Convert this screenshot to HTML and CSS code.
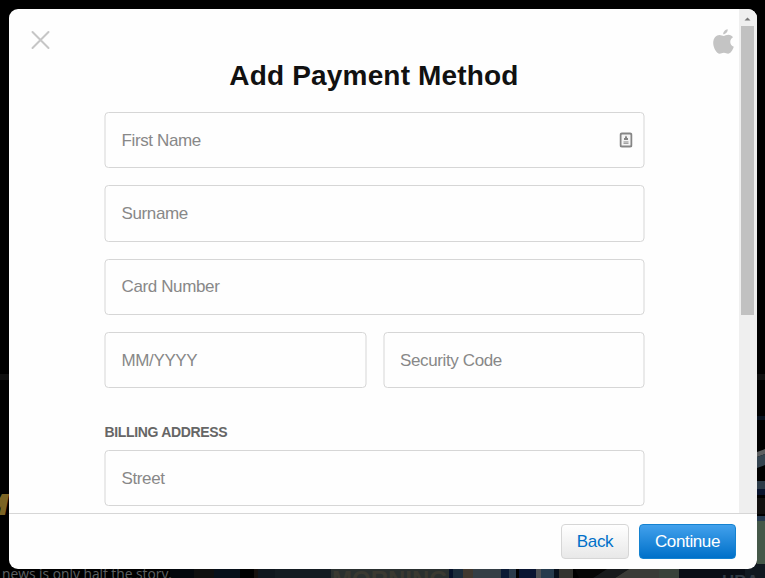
FILE: index.html
```html
<!DOCTYPE html>
<html lang="en">
<head>
    <meta charset="UTF-8">
    <meta name="viewport" content="width=device-width, initial-scale=1.0">
    <title>Add Payment Method</title>
    <link rel="stylesheet" href="styles.css">
</head>
<body>
    <!-- Dimmed page behind the dialog -->
    <svg class="backdrop" viewBox="0 0 765 578" aria-hidden="true">
        <rect width="765" height="578" fill="#000"/>
        <rect y="374" width="765" height="6" fill="#101010"/>
        <text x="-16" y="514" class="backdrop-heading">M</text>

        <!-- right edge -->
        <rect x="757" y="416" width="8" height="4" fill="#07111f"/>
        <path d="M757 452l8-3v5l-8 3z" fill="#5d5f61"/>
        <path d="M757 457l8-3v11l-8 3z" fill="#34434f"/>
        <rect x="757" y="481" width="8" height="8" fill="#2c3b48"/>
        <rect x="757" y="489" width="8" height="6" fill="#09142d"/>
        <rect x="757" y="498" width="8" height="16" fill="#11100f"/>
        <rect x="757" y="516" width="8" height="5" fill="#273b50"/>
        <rect x="757" y="521" width="8" height="43" fill="#455849"/>
        <rect x="745" y="564" width="20" height="14" fill="#101820"/>

        <!-- bottom edge -->
        <rect x="170" y="569" width="24" height="9" fill="#04080d"/>
        <rect x="194" y="569" width="20" height="9" fill="#0f0f0f"/>
        <rect x="214" y="569" width="26" height="9" fill="#07101a"/>
        <rect x="254" y="569" width="4" height="9" fill="#17110e"/>
        <rect x="258" y="569" width="17" height="9" fill="#10171e"/>
        <rect x="275" y="569" width="56" height="9" fill="#141c22"/>
        <rect x="331" y="569" width="118" height="9" fill="#2a302f"/>
        <text x="332" y="588" class="backdrop-sign">MORNING</text>
        <rect x="449" y="569" width="4" height="9" fill="#07122a"/>
        <rect x="453" y="569" width="10" height="9" fill="#1c2c3b"/>
        <rect x="463" y="569" width="10" height="9" fill="#40382f"/>
        <rect x="473" y="569" width="28" height="9" fill="#343e45"/>
        <rect x="501" y="569" width="8" height="9" fill="#0b1a35"/>
        <rect x="509" y="569" width="7" height="9" fill="#2b3b4b"/>
        <rect x="519" y="569" width="17" height="9" fill="#091431"/>
        <rect x="536" y="569" width="5" height="9" fill="#4d5054"/>
        <rect x="541" y="569" width="13" height="9" fill="#263b4d"/>
        <rect x="554" y="569" width="5" height="9" fill="#07101b"/>
        <rect x="559" y="569" width="14" height="9" fill="#33332f"/>
        <path d="M575 569h32l-14 9h-14z" fill="#060606"/>
        <path d="M607 569h22l-14 9h-22z" fill="#171a1c"/>
        <path d="M629 569h30v9h-44z" fill="#3a3b37"/>
        <rect x="659" y="569" width="20" height="9" fill="#39423a"/>
        <rect x="679" y="569" width="66" height="9" fill="#090d15"/>
        <text x="722" y="587" class="backdrop-label">HBA</text>

        <text x="2" y="579" class="backdrop-text">news is only half the story.</text>
    </svg>

    <div class="modal">
        <div class="modal-body">
            <div class="content">
                <div class="icon-row">
                    <svg class="close-icon" width="20" height="20" viewBox="0 0 20 20">
                        <path d="M2.500 2l16 16M18.500 2l-16 16"/>
                    </svg>
                    <svg class="apple-icon" width="21" height="26" viewBox="0 0 21 26">
                        <path d="M14.700 0.300c.2 2.600-2 5-4.500 5C10 2.800 12.200.600 14.700.300z"/>
                        <path d="M10.700 7c1 0 2.600-1.200 4.800-1.200 1.800 0 3.500.9 4.500 2.400-4 2.300-3.400 7.900.8 9.500-1.100 3.300-3.400 7-5.700 7-1.600 0-2.300-1-4.200-1s-2.700 1-4.200 1C3.500 24.700.2 18.600.2 14 .2 8.800 3.400 6 6.400 6c1.900 0 3.300 1 4.300 1z"/>
                    </svg>
                </div>

                <h1>Add Payment Method</h1>

                <form id="paymentForm" class="payment-form">
                    <div class="field has-icon">
                        <input type="text" name="firstName" placeholder="First Name">
                        <svg class="contact-icon" width="13" height="16" viewBox="0 0 13 16">
                            <rect x="1" y="1.500" width="11" height="13" rx="1.500"/>
                            <path d="M6.500 3.500l1 1.500v1h1v2h-4V6h1V5zM4 9.500h5v1H4zM4 11.300h5v.7H4z"/>
                        </svg>
                    </div>
                    <div class="field">
                        <input type="text" name="surname" placeholder="Surname">
                    </div>
                    <div class="field">
                        <input type="text" name="cardNumber" placeholder="Card Number">
                    </div>
                    <div class="field-row">
                        <div class="field">
                            <input type="text" name="expiry" placeholder="MM/YYYY">
                        </div>
                        <div class="field">
                            <input type="text" name="securityCode" placeholder="Security Code">
                        </div>
                    </div>

                    <h2>BILLING ADDRESS</h2>
                    <div class="field">
                        <input type="text" name="street" placeholder="Street">
                    </div>
                </form>
            </div>

            <div class="scrollbar">
                <svg class="scroll-arrow" width="7" height="4" viewBox="0 0 7 4">
                    <path d="M3.500 0.500L6.500 3.500H0.500z"/>
                </svg>
                <div class="scroll-thumb"></div>
            </div>
        </div>

        <div class="modal-footer">
            <button type="button" class="btn btn-back">Back</button>
            <button type="submit" form="paymentForm" class="btn btn-continue">Continue</button>
        </div>
    </div>
</body>
</html>
```
FILE: styles.css
```css
* {
    box-sizing: border-box;
    margin: 0;
    padding: 0;
    font-family: Arial, 'Liberation Sans', sans-serif;
}

body {
    height: 578px;
    padding: 9px 8px 9px 9px;
    background: #000;
    overflow: hidden;
}

.backdrop {
    position: absolute;
    top: 0;
    left: 0;
    width: 765px;
    height: 578px;
}

.backdrop-heading {
    font-size: 28px;
    font-weight: bold;
    font-style: italic;
    fill: #7c6424;
    stroke: #7c6424;
    stroke-width: 2;
}

.backdrop-text {
    font-family: 'Open Sans', sans-serif;
    font-size: 13.8px;
    fill: #5d6163;
}

.backdrop-sign {
    font-size: 24px;
    font-weight: bold;
    fill: #3a3931;
}

.backdrop-label {
    font-size: 17px;
    font-weight: bold;
    fill: #303a44;
}

.modal {
    position: relative;
    display: flex;
    flex-direction: column;
    height: 560px;
    background: #fefefe;
    border-radius: 9px;
    overflow: hidden;
}

.modal-body {
    display: flex;
    height: 504px;
    overflow: hidden;
}

.content {
    flex: 1;
}

.icon-row {
    display: flex;
    justify-content: space-between;
    height: 46px;
    padding: 20px 5px 0 21px;
}

.close-icon {
    margin-top: 1px;
    fill: none;
    stroke: #c6c6c6;
    stroke-width: 2;
    stroke-linecap: round;
}

.apple-icon {
    fill: #c4c4c4;
}

h1 {
    height: 57px;
    line-height: 41px;
    text-align: center;
    font-size: 28px;
    letter-spacing: 0.17px;
    color: #111;
}

.payment-form {
    display: flex;
    flex-direction: column;
    gap: 17px;
    width: 540px;
    margin: 0 auto;
    transform: translateX(0.5px);
}

.field {
    position: relative;
    flex: 1;
}

.field-row {
    display: flex;
    gap: 17px;
}

input {
    display: block;
    width: 100%;
    height: 56.3px;
    padding: 1.4px 16px 0;
    border: 1px solid #d6d6d6;
    border-radius: 4px;
    background: #fefefe;
    font-size: 17px;
    letter-spacing: -0.374px;
    color: #333;
}

input::placeholder {
    color: #888;
    opacity: 1;
}

.contact-icon {
    position: absolute;
    top: 20px;
    right: 12.5px;
    fill: #858585;
}

.contact-icon rect {
    fill: #f4f4f4;
    stroke: #858585;
    stroke-width: 2;
}

h2 {
    margin-top: 19px;
    margin-bottom: -8px;
    line-height: 17px;
    font-size: 14px;
    letter-spacing: -0.33px;
    color: #666;
}

.scrollbar {
    display: flex;
    flex-direction: column;
    align-items: center;
    width: 18px;
    padding-right: 1px;
    background: #efefef;
}

.scroll-arrow {
    height: 4px;
    margin: 8px 0 5px;
    fill: #777;
}

.scroll-thumb {
    width: 13px;
    height: 289px;
    background: #c1c1c1;
}

.modal-footer {
    display: flex;
    justify-content: flex-end;
    align-items: flex-start;
    gap: 10px;
    height: 56px;
    padding: 10px 21px 0 0;
    border-top: 1px solid #d6d6d6;
}

.btn {
    height: 35px;
    border-radius: 4px;
    font-size: 17px;
    letter-spacing: -0.374px;
    cursor: pointer;
}

.btn-back {
    width: 68px;
    border: 1px solid #d6d6d6;
    background: linear-gradient(#fff, #e8e8e8);
    color: #0070c9;
}

.btn-continue {
    width: 97px;
    border: 1px solid #1482d0;
    background: linear-gradient(#42a1ec, #0070c9);
    color: #fff;
}
```
